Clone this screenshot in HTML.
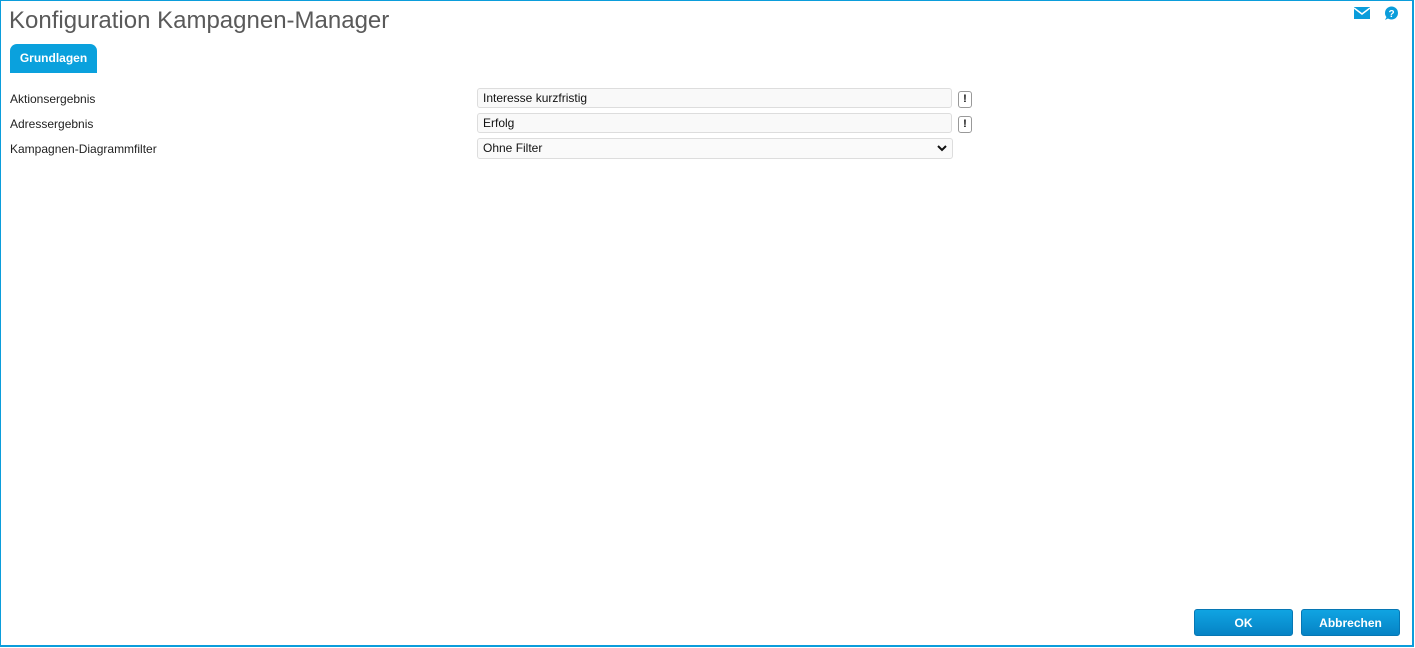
<!DOCTYPE html>
<html><head><style>
body{margin:0;width:1415px;height:648px;overflow:hidden;font-family:"Liberation Sans",Arial,sans-serif;background:#fff}
.frame{position:absolute;left:0;top:0;width:1411px;height:644px;border:1px solid #0b9ddb;border-right-width:2px;border-bottom-width:2px}
.title{position:absolute;left:9px;top:7px;font-size:24px;color:#5a5a5a}
.tab{position:absolute;left:10px;top:44px;width:87px;height:29px;background:#0aa1dd;border-radius:7px 7px 0 0;color:#fff;font-size:12px;font-weight:bold;text-align:center;line-height:29px}
.lbl{position:absolute;left:10px;font-size:12px;color:#222}
.inp{position:absolute;left:477px;width:468px;height:18px;border:1px solid #ddd;border-radius:3px;background:#f9f9f9;font-size:12px;line-height:19px;padding-left:5px;color:#111}
.ex{position:absolute;left:958px;width:12px;height:15px;border:1px solid #999;border-radius:3px;font-size:11px;font-weight:bold;text-align:center;line-height:15px;color:#111}
.btn{position:absolute;top:609px;width:99px;height:27px;border-radius:3px;background:linear-gradient(#10a4e2,#0683c5);border:1px solid #0677b4;box-sizing:border-box;color:#fff;font-size:12px;font-weight:bold;text-align:center;line-height:26px}
</style></head><body>
<div class="frame"></div>
<div class="title">Konfiguration Kampagnen-Manager</div>
<svg style="position:absolute;left:1354px;top:7px" width="16" height="12" viewBox="0 0 16 12"><rect x="0" y="0" width="16" height="12" fill="#0a9ddb"/><path d="M0 1 L8 7 L16 1" stroke="#fff" stroke-width="1.5" fill="none"/></svg>
<svg style="position:absolute;left:1383px;top:6px" width="16" height="15" viewBox="0 0 16 15"><circle cx="8.5" cy="7" r="6.5" fill="#0a9ddb"/><path d="M2 14 L4 10 L6 12Z" fill="#0a9ddb"/><text x="8.5" y="11" font-size="10" font-weight="bold" fill="#fff" text-anchor="middle" font-family="Liberation Sans">?</text></svg>
<div class="tab">Grundlagen</div>
<div class="lbl" style="top:92px">Aktionsergebnis</div>
<div class="lbl" style="top:117px">Adressergebnis</div>
<div class="lbl" style="top:142px">Kampagnen-Diagrammfilter</div>
<div class="inp" style="top:88px">Interesse kurzfristig</div>
<div class="inp" style="top:113px">Erfolg</div>
<div class="inp" style="top:138px;width:469px;height:19px;background:#fafafa">Ohne Filter
<svg style="position:absolute;right:5px;top:6px" width="10" height="7" viewBox="0 0 10 7"><path d="M1 1 L5 5 L9 1" stroke="#111" stroke-width="2" fill="none"/></svg></div>
<div class="ex" style="top:91px">!</div>
<div class="ex" style="top:116px">!</div>
<div class="btn" style="left:1194px">OK</div>
<div class="btn" style="left:1301px">Abbrechen</div>
</body></html>
